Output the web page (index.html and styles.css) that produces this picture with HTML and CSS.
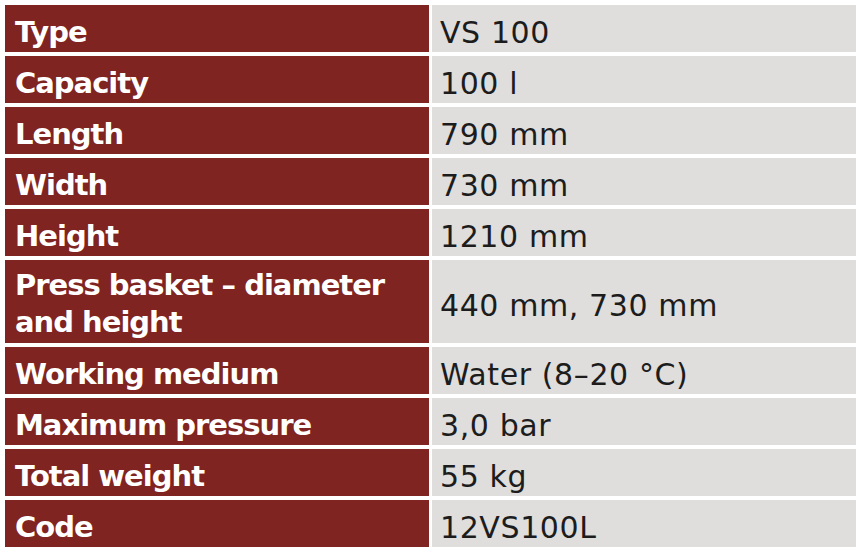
FILE: index.html
```html
<!DOCTYPE html>
<html lang="en">
<head>
<meta charset="utf-8">
<title>VS 100 specifications</title>
<link rel="stylesheet" href="styles.css">
</head>
<body>
<div class="spec">
  <div class="k">Type</div><div class="v">VS 100</div>
  <div class="k">Capacity</div><div class="v">100 l</div>
  <div class="k">Length</div><div class="v">790 mm</div>
  <div class="k">Width</div><div class="v">730 mm</div>
  <div class="k">Height</div><div class="v">1210 mm</div>
  <div class="k k-tall">Press basket – diameter<br>and height</div><div class="v">440 mm, 730 mm</div>
  <div class="k">Working medium</div><div class="v">Water (8–20 °C)</div>
  <div class="k">Maximum pressure</div><div class="v">3,0 bar</div>
  <div class="k">Total weight</div><div class="v">55 kg</div>
  <div class="k">Code</div><div class="v">12VS100L</div>
</div>
</body>
</html>
```
FILE: styles.css
```css
html, body {
  margin: 0;
  padding: 0;
  background: #ffffff;
}
body {
  padding: 5px 0 0 5px;
}
.spec {
  display: grid;
  grid-template-columns: 424px 424px;
  grid-auto-rows: minmax(47px, auto);
  column-gap: 3px;
  row-gap: 4px;
  font-family: "DejaVu Sans", sans-serif;
  font-size: 30px;
}
.k, .v {
  box-sizing: border-box;
  display: flex;
  align-items: center;
  padding-top: 7px;
  line-height: 37px;
  white-space: nowrap;
}
.k {
  background: #7f2420;
  color: #ffffff;
  font-weight: bold;
  font-size: 29px;
  padding-left: 10px;
  letter-spacing: -1px;
}
.k-tall {
  display: block;
  padding-top: 7px;
  height: 83px;
}
.v {
  background: #dfdedc;
  color: #1c1c1c;
  padding-left: 8px;
  letter-spacing: 0.6px;
}
```
